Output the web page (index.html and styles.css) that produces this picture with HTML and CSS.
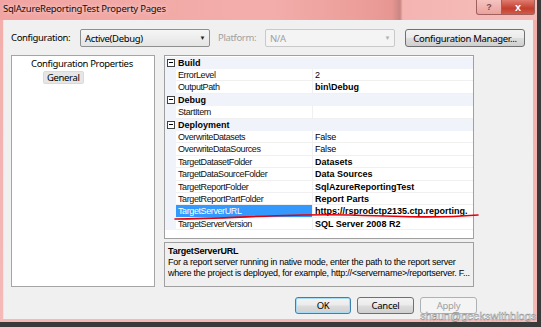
FILE: index.html
```html
<!DOCTYPE html>
<html>
<head>
<meta charset="utf-8">
<link rel="stylesheet" href="styles.css">
</head>
<body>
<div class="window">
  <div class="titlebar">
    <span class="title">SqlAzureReportingTest Property Pages</span>
    <div class="caption-btns">
      <span class="cap help">?</span>
      <span class="cap close">x</span>
    </div>
  </div>
  <div class="client">
    <div class="toprow">
      <span class="lbl cfg">Configuration:</span>
      <div class="combo"><span>Active(Debug)</span><span class="arrow">▼</span></div>
      <span class="lbl plat">Platform:</span>
      <div class="combo disabled"><span>N/A</span><span class="arrow">▼</span></div>
      <div class="btn cm">Configuration Manager...</div>
    </div>
    <div class="main">
      <div class="tree">
        <div class="node">Configuration Properties</div>
        <div class="leaf"><span>General</span></div>
      </div>
      <div class="rightcol">
        <div class="grid">
          <div class="row cat"><span class="gut"><i class="minus"></i></span><span class="cname">Build</span></div>
          <div class="row"><span class="gut"></span><span class="name">ErrorLevel</span><span class="val">2</span></div>
          <div class="row"><span class="gut"></span><span class="name">OutputPath</span><span class="val b">bin\Debug</span></div>
          <div class="row cat"><span class="gut"><i class="minus"></i></span><span class="cname">Debug</span></div>
          <div class="row"><span class="gut"></span><span class="name">StartItem</span><span class="val"></span></div>
          <div class="row cat"><span class="gut"><i class="minus"></i></span><span class="cname">Deployment</span></div>
          <div class="row"><span class="gut"></span><span class="name">OverwriteDatasets</span><span class="val">False</span></div>
          <div class="row"><span class="gut"></span><span class="name">OverwriteDataSources</span><span class="val">False</span></div>
          <div class="row"><span class="gut"></span><span class="name">TargetDatasetFolder</span><span class="val b">Datasets</span></div>
          <div class="row"><span class="gut"></span><span class="name">TargetDataSourceFolder</span><span class="val b">Data Sources</span></div>
          <div class="row"><span class="gut"></span><span class="name">TargetReportFolder</span><span class="val b">SqlAzureReportingTest</span></div>
          <div class="row"><span class="gut"></span><span class="name">TargetReportPartFolder</span><span class="val b">Report Parts</span></div>
          <div class="row"><span class="gut"></span><span class="name sel">TargetServerURL</span><span class="val b">https://rsprodctp2135.ctp.reporting.</span></div>
          <div class="row"><span class="gut"></span><span class="name">TargetServerVersion</span><span class="val b">SQL Server 2008 R2</span></div>
        </div>
        <div class="desc">
          <div class="dtitle">TargetServerURL</div>
          <div class="dline">For a report server running in native mode, enter the path to the report server</div>
          <div class="dline">where the project is deployed, for example, http://&lt;servername&gt;/reportserver. F...</div>
        </div>
      </div>
    </div>
    <div class="buttons">
      <div class="btn ok">OK</div>
      <div class="btn">Cancel</div>
      <div class="btn dis">Apply</div>
    </div>
  </div>
</div>
<svg class="redline" width="541" height="327" viewBox="0 0 541 327">
  <path d="M175 219 C 230 219, 290 213, 350 215 S 440 218, 478 215" fill="none" stroke="#e0000a" stroke-width="1.6" stroke-linecap="round"/>
</svg>
<div class="watermark">shaun@geekswithblogs</div>
</body>
</html>
```
FILE: styles.css
```css
html, body {
  margin: 0;
  padding: 0;
}
body {
  width: 541px;
  height: 327px;
  background: #3a3a3a;
  position: relative;
  overflow: hidden;
  font-family: "Noto Sans", "Open Sans", sans-serif;
}
.window {
  width: 537px;
  height: 322px;
  background: linear-gradient(#f3aeab, #f5b9b6);
  display: flex;
  flex-direction: column;
}
.titlebar {
  height: 20px;
  position: relative;
  display: flex;
  align-items: flex-start;
  background: linear-gradient(90deg, #f1a4a1 0%, #f3aeab 50%, #ea9b97 70%, #e79692 73%, #c98683 74.5%, #f4b5b2 75%, #f5bcb9 100%);
}
.title {
  font-size: 9.5px;
  letter-spacing: -0.25px;
  color: #101010;
  padding: 2px 0 0 3px;
  line-height: 13px;
  text-shadow: 0 0 4px rgba(255,255,255,0.7);
}
.caption-btns {
  margin-left: auto;
  display: flex;
  height: 15px;
  margin-right: 2px;
}
.cap {
  display: flex;
  align-items: center;
  justify-content: center;
  height: 14px;
  border: 1px solid #a0615e;
  border-top: none;
  font-family: "Liberation Sans", sans-serif;
  font-weight: bold;
}
.help {
  width: 24px;
  border-radius: 0 0 0 3px;
  background: linear-gradient(#f6c3c0, #e9a29e);
  color: #7a4a48;
  font-size: 9px;
}
.close {
  width: 32px;
  border-left: none;
  border-radius: 0 0 3px 0;
  background: linear-gradient(#e07b70, #c2402f 60%, #d35a48);
  color: #fff;
  font-size: 11px;
  line-height: 10px;
}
.client {
  margin: 0 4px 3px 4px;
  flex: 1;
  background: #f0f0f0;
  padding: 9px 0 0 7px;
  display: flex;
  flex-direction: column;
  box-shadow: -1px 0 0 #fbe0de;
}
.toprow {
  display: flex;
  height: 18px;
  align-items: center;
  font-size: 9.5px;
  letter-spacing: -0.35px;
}
.lbl { color: #000; line-height: 18px; }
.cfg { width: 69px; }
.plat { width: 47px; margin-left: 8px; color: #a0a0a0; }
.combo {
  width: 130px;
  height: 18px;
  box-sizing: border-box;
  border: 1px solid #8e8f8f;
  border-radius: 2px;
  background: linear-gradient(#f6f6f6, #e4e4e4);
  display: flex;
  align-items: center;
  padding-left: 4px;
  padding-right: 4px;
}
.combo .arrow {
  margin-left: auto;
  font-size: 6px;
  color: #222;
}
.combo.disabled {
  background: #f4f4f4;
  border-color: #c9c9c9;
  color: #a0a0a0;
}
.combo.disabled .arrow { color: #b0b0b0; }
.btn {
  height: 17px;
  box-sizing: border-box;
  border: 1px solid #707070;
  border-radius: 3px;
  background: linear-gradient(#f3f3f3 0%, #ebebeb 48%, #dddddd 52%, #cfcfcf 100%);
  display: flex;
  align-items: center;
  justify-content: center;
  font-size: 9.5px;
  letter-spacing: -0.3px;
  color: #000;
}
.btn.cm {
  width: 120px;
  height: 18px;
  margin-left: 10px;
}
.main {
  display: flex;
  margin-top: 8px;
  height: 232px;
}
.tree {
  width: 144px;
  box-sizing: border-box;
  border: 1px solid #a5a5a5;
  background: #fff;
  font-size: 9.5px;
  letter-spacing: -0.35px;
}
.node {
  padding-left: 19px;
  line-height: 13px;
  margin-top: 1px;
}
.leaf {
  padding-left: 31px;
  margin-top: 1px;
}
.leaf span {
  display: inline-block;
  background: #e6e6e6;
  border: 1px solid #dadada;
  border-radius: 2px;
  padding: 0 3px;
  line-height: 11px;
  height: 11px;
}
.rightcol {
  width: 310px;
  margin-left: 9px;
  display: flex;
  flex-direction: column;
}
.grid {
  height: 184px;
  box-sizing: border-box;
  border: 1px solid #a0a0a0;
  background: #fff;
  font-family: "Liberation Sans", Arial, sans-serif;
  font-size: 9px;
  padding-top: 0.6px;
}
.row {
  display: flex;
  height: 12.4px;
  line-height: 12px;
  align-items: stretch;
}
.gut {
  width: 11px;
  flex: none;
  background: #f0f3f9;
  display: flex;
  align-items: center;
  justify-content: center;
}
.minus {
  width: 6px;
  height: 6px;
  border: 1px solid #404040;
  position: relative;
  background: #fff;
}
.minus::after {
  content: "";
  position: absolute;
  left: 1px;
  right: 1px;
  top: 2.5px;
  height: 1px;
  background: #000;
}
.cat {
  background: #f0f3f9;
}
.cname {
  font-weight: bold;
  padding-left: 2px;
}
.name {
  width: 137px;
  flex: none;
  box-sizing: border-box;
  padding-left: 2px;
  border-right: 1px solid #f0f0f0;
  border-bottom: 1px solid #f0f0f0;
  letter-spacing: -0.4px;
  color: #101010;
  white-space: nowrap;
  overflow: hidden;
}
.name.sel {
  background: #3399ff;
  color: #fff;
}
.val {
  flex: 1;
  padding-left: 2px;
  border-bottom: 1px solid #f0f0f0;
  white-space: nowrap;
  overflow: hidden;
  letter-spacing: -0.2px;
}
.val.b { font-weight: bold; letter-spacing: 0; }
.desc {
  margin-top: 3px;
  flex: 1;
  box-sizing: border-box;
  border: 1px solid #a0a0a0;
  background: #f0f0f0;
  padding: 3px 0 0 3px;
  font-family: "Liberation Sans", Arial, sans-serif;
  font-size: 9px;
  line-height: 11px;
  white-space: nowrap;
  overflow: hidden;
}
.dtitle { font-weight: bold; letter-spacing: -0.2px; }
.dline { letter-spacing: -0.25px; }
.buttons {
  display: flex;
  justify-content: flex-end;
  gap: 6px;
  margin-top: 10px;
  padding-right: 56px;
}
.buttons .btn { width: 57px; }
.buttons .btn.ok {
  width: 56px;
  border-color: #3c7fb1;
  box-shadow: inset 0 0 0 1px #a8dcf5;
}
.buttons .btn.dis {
  border-color: #adb2b5;
  background: #f4f4f4;
  color: #a0a0a0;
}
.redline {
  position: absolute;
  left: 0;
  top: 0;
  pointer-events: none;
}
.watermark {
  position: absolute;
  left: 420px;
  top: 310px;
  font-family: "Liberation Sans", Arial, sans-serif;
  font-size: 11px;
  color: #ffffff;
  -webkit-text-stroke: 0.45px #8a8a8a;
  line-height: 13px;
}
```
